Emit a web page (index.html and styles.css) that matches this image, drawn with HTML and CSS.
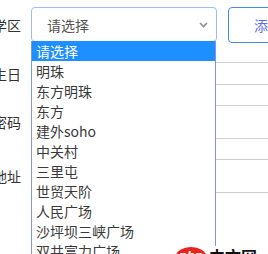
FILE: index.html
```html
<!DOCTYPE html>
<html lang="zh">
<head>
<meta charset="utf-8">
<link rel="stylesheet" href="styles.css">
</head>
<body>
<form class="form">
  <div class="row row-select">
    <div class="label"><span>学区</span></div>
    <div class="field-wrap">
      <div class="select-line">
        <div class="select">
          <span class="select-text">请选择</span>
          <svg class="chev" width="9" height="6" viewBox="0 0 9 6"><path d="M1 1l3.5 3.5L8 1" fill="none" stroke="#8c8c8c" stroke-width="1.6"/></svg>
        </div>
        <button type="button" class="btn">添加学区</button>
      </div>
      <ul class="options">
        <li class="opt active">请选择</li>
        <li class="opt">明珠</li>
        <li class="opt">东方明珠</li>
        <li class="opt">东方</li>
        <li class="opt">建外soho</li>
        <li class="opt">中关村</li>
        <li class="opt">三里屯</li>
        <li class="opt">世贸天阶</li>
        <li class="opt">人民广场</li>
        <li class="opt">沙坪坝三峡广场</li>
        <li class="opt">双井富力广场</li>
      </ul>
    </div>
  </div>
  <div class="row row-short">
    <div class="label"><span>生日</span></div>
    <div class="field"></div>
  </div>
  <div class="row row-tall">
    <div class="label"><span>密码</span></div>
    <div class="field"></div>
  </div>
  <div class="row row-tall">
    <div class="label"><span>地址</span></div>
    <div class="field"></div>
  </div>
</form>
<div class="watermark">
  <span class="php">php</span><span class="cn">中文网</span>
</div>
</body>
</html>
```
FILE: styles.css
```css
html, body {
  margin: 0;
  padding: 0;
  background: #fff;
  overflow: hidden;
}
body {
  width: 268px;
  height: 254px;
  position: relative;
  font-family: "Noto Sans CJK SC", "Noto Sans", sans-serif;
  font-size: 14px;
  color: #333;
}
.form {
  display: flex;
  flex-direction: column;
  gap: 20px;
  padding-top: 7px;
}
.row {
  display: grid;
  grid-template-columns: 21px 1fr;
  column-gap: 10px;
  align-items: center;
}
.label {
  display: flex;
  justify-content: flex-end;
  white-space: nowrap;
  color: #333;
  line-height: 20px;
}
.row-select {
  height: 35px;
  position: relative;
  z-index: 2;
}
.field-wrap {
  position: relative;
  height: 35px;
}
.select-line {
  display: flex;
  gap: 11px;
  align-items: flex-start;
  width: 300px;
}
.select {
  box-sizing: border-box;
  width: 186px;
  height: 35px;
  border: 1px solid #9cbcf2;
  border-radius: 4px;
  display: flex;
  align-items: center;
  justify-content: space-between;
  padding: 0 8px 0 15px;
  color: #555;
  flex: none;
}
.select-text {
  line-height: 20px;
}
.chev {
  display: block;
  margin-top: 1px;
}
.btn {
  box-sizing: border-box;
  height: 36px;
  border: 1px solid #3f8df0;
  border-radius: 4px;
  background: #fff;
  color: #5b6cf2;
  font: inherit;
  font-size: 14px;
  padding: 0 25px;
  white-space: nowrap;
  flex: none;
}
.options {
  position: absolute;
  top: 34px;
  left: 0;
  width: 185px;
  box-sizing: border-box;
  margin: 0;
  padding: 0;
  list-style: none;
  background: #fff;
  border-left: 1px solid #7f98cf;
  border-right: 1px solid #7f98cf;
}
.opt {
  height: 20px;
  line-height: 20px;
  padding-left: 4px;
  color: #3a3a3a;
  white-space: nowrap;
}
.opt.active {
  background: #1e8fff;
  color: #fff;
}
.field {
  box-sizing: border-box;
  border-top: 1px solid #cfcfcf;
  border-bottom: 1px solid #cfcfcf;
  width: 260px;
}
.row-short .field {
  height: 23px;
}
.row-tall .field {
  height: 34px;
}
.watermark {
  position: absolute;
  left: 176px;
  top: 246px;
  width: 86px;
  height: 20px;
  background: #fff;
  display: flex;
  align-items: flex-start;
  gap: 3px;
  z-index: 5;
}
.php {
  margin-top: 1px;
  width: 30px;
  height: 18px;
  border-radius: 50%;
  background: #e8231c;
  color: #fff;
  font-family: "Liberation Sans", sans-serif;
  font-style: italic;
  font-weight: bold;
  font-size: 13px;
  line-height: 17px;
  text-align: center;
}
.cn {
  font-size: 16px;
  line-height: 20px;
  color: #111;
  font-weight: bold;
}
```
